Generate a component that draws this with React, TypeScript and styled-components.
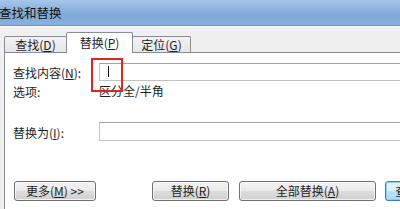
import styled, { createGlobalStyle } from "styled-components";

const GlobalStyle = createGlobalStyle`
  html, body {
    margin: 0;
    padding: 0;
    background: #f0f0f0;
    overflow: hidden;
  }
  body {
    font-family: "Noto Sans CJK SC", "Noto Sans", sans-serif;
    font-size: 12px;
    color: #1e1e1e;
  }
`;

const Window = styled.div`
  width: 400px;
  height: 209px;
  overflow: hidden;
  display: flex;
  flex-direction: column;
  background: #f0f0f0;
`;

const TitleBar = styled.div`
  height: 25px;
  flex-shrink: 0;
  display: flex;
  align-items: center;
  background: linear-gradient(
    to bottom,
    #a6c5ea 0%,
    #8fb4e0 35%,
    #7ea8d8 65%,
    #8ab2e0 100%
  );
  border-bottom: 1px solid #7890b0;
`;

const Title = styled.span`
  font-size: 12.5px;
  line-height: 14px;
  color: #111;
  margin-left: -1px;
`;

const Body = styled.div`
  flex: 1;
  display: flex;
  flex-direction: column;
  border-top: 1px solid #fbfbfb;
  padding-left: 4px;
`;

const TabStrip = styled.div`
  display: flex;
  align-items: flex-end;
  height: 20px;
  margin-top: 5px;
  flex-shrink: 0;
`;

const Tab = styled.div<{ $active?: boolean; $width: number }>`
  position: relative;
  box-sizing: border-box;
  width: ${(p) => p.$width}px;
  height: ${(p) => (p.$active ? 21 : 16)}px;
  margin-bottom: ${(p) => (p.$active ? -1 : 0)}px;
  margin-left: -1px;
  &:first-child {
    margin-left: 0;
  }
  z-index: ${(p) => (p.$active ? 2 : 1)};
  display: flex;
  align-items: center;
  justify-content: center;
  padding-top: ${(p) => (p.$active ? 0 : 1)}px;
  border: 1px solid #898c95;
  border-bottom: none;
  border-radius: 2px 2px 0 0;
  background: ${(p) =>
    p.$active ? "#ffffff" : "linear-gradient(to bottom, #f3f3f3, #e6e6e6)"};
  font-size: 12px;
  line-height: 14px;
  white-space: nowrap;
`;

const Key = styled.span`
  text-decoration: underline;
  text-underline-offset: 1px;
`;

const Panel = styled.div`
  flex: 1;
  width: 420px;
  background: #ffffff;
  border-top: 1px solid #898c95;
  border-left: 1px solid #898c95;
  padding: 10px 0 0 8px;
  display: flex;
  flex-direction: column;
`;

const FieldRow = styled.div<{ $top?: number }>`
  display: flex;
  align-items: center;
  margin-top: ${(p) => p.$top ?? 0}px;
`;

const Label = styled.span`
  width: 86px;
  flex-shrink: 0;
  line-height: 14px;
  padding-top: 2px;
  white-space: nowrap;
`;

const InputBox = styled.div<{ $h: number }>`
  position: relative;
  box-sizing: border-box;
  flex: 1;
  height: ${(p) => p.$h}px;
  border: 1px solid #c3c3c3;
  border-top-color: #a3a3a3;
  background: #fff;
`;

const Caret = styled.span`
  position: absolute;
  left: 8px;
  top: 2px;
  width: 1px;
  height: 11px;
  background: #111;
`;

const Highlight = styled.span`
  position: absolute;
  left: -9px;
  top: -6px;
  width: 32px;
  height: 34px;
  box-sizing: border-box;
  border: 2px solid #e0241f;
`;

const OptionRow = styled.div`
  display: flex;
  align-items: center;
  height: 20px;
  line-height: 14px;
`;

const ButtonRow = styled.div`
  display: flex;
  align-items: center;
  margin-top: 40px;
  margin-left: 1px;
`;

const Button = styled.div<{ $width: number; $gap?: number; $default?: boolean }>`
  box-sizing: border-box;
  flex-shrink: 0;
  width: ${(p) => p.$width}px;
  height: 20px;
  margin-left: ${(p) => p.$gap ?? 0}px;
  display: flex;
  align-items: center;
  justify-content: center;
  border: 1px solid ${(p) => (p.$default ? "#3c7fb1" : "#707070")};
  border-radius: 3px;
  background: ${(p) =>
    p.$default
      ? "linear-gradient(to bottom, #eaf6fd 0%, #d9f0fc 50%, #bee6fd 50%, #a7d9f5 100%)"
      : "linear-gradient(to bottom, #f2f2f2 0%, #ebebeb 50%, #dddddd 50%, #cfcfcf 100%)"};
  box-shadow: inset 0 0 0 1px
    ${(p) => (p.$default ? "#8cd3f8" : "rgba(255,255,255,0.7)")};
  line-height: 14px;
  white-space: nowrap;
`;

export default function App() {
  return (
    <Window>
      <GlobalStyle />
      <TitleBar>
        <Title>查找和替换</Title>
      </TitleBar>
      <Body>
        <TabStrip>
          <Tab $width={63}>
            查找(<Key>D</Key>)
          </Tab>
          <Tab $active $width={67}>
            替换(<Key>P</Key>)
          </Tab>
          <Tab $width={59}>
            定位(<Key>G</Key>)
          </Tab>
        </TabStrip>
        <Panel>
          <FieldRow>
            <Label>
              查找内容(<Key>N</Key>):
            </Label>
            <InputBox $h={18}>
              <Caret />
              <Highlight />
            </InputBox>
          </FieldRow>
          <OptionRow>
            <Label>选项:</Label>
            <span>区分全/半角</span>
          </OptionRow>
          <FieldRow $top={21}>
            <Label>
              替换为(<Key>I</Key>):
            </Label>
            <InputBox $h={19} />
          </FieldRow>
          <ButtonRow>
            <Button $width={82}>
              更多(<Key>M</Key>)&nbsp;&gt;&gt;
            </Button>
            <Button $width={77} $gap={56}>
              替换(<Key>R</Key>)
            </Button>
            <Button $width={137} $gap={10}>
              全部替换(<Key>A</Key>)
            </Button>
            <Button $width={95} $gap={9} $default>
              查找下一个(<Key>F</Key>)
            </Button>
          </ButtonRow>
        </Panel>
      </Body>
    </Window>
  );
}
